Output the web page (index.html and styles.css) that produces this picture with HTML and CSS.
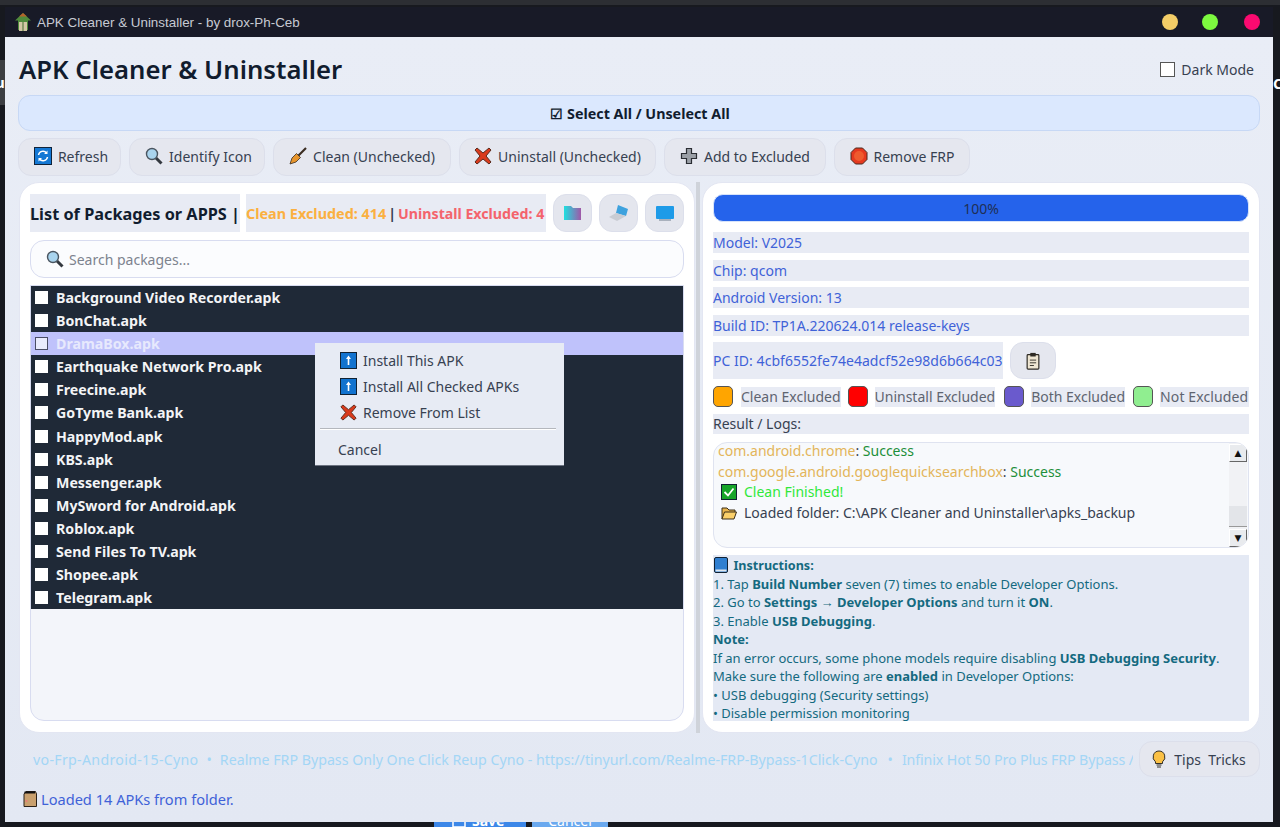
FILE: index.html
```html
<!DOCTYPE html>
<html lang="en">
<head>
<meta charset="utf-8">
<title>APK Cleaner &amp; Uninstaller</title>
<link rel="stylesheet" href="styles.css">
</head>
<body>
<div class="behind behind-top"></div>
<div class="behind behind-left"><span>u</span></div>
<div class="behind behind-right"><span>C</span></div>
<div class="behind behind-save"><svg class="savei" viewBox="0 0 14 14"><rect x="1" y="1" width="12" height="12" fill="none" stroke="#fff" stroke-width="1.500"/><rect x="4.500" y="1" width="5" height="4" fill="#fff"/></svg><span>Save</span></div>
<div class="behind behind-cancel"><span>Cancel</span></div>

<main class="window">
  <div class="titlebar">
    <svg class="ico16" viewBox="0 0 16 18"><path d="M8 0 16 7.500H13V17H3V7.500H0Z" fill="#4f8a3c"/><path d="M4 9H12V18H4Z" fill="#d3c7a6"/><path d="M7 9H9V18H7Z" fill="#8c9a6c"/><path d="M8 0 12 3.500H4Z" fill="#b5622a"/></svg>
    <span class="title-text">APK Cleaner &amp; Uninstaller - by drox-Ph-Ceb</span>
    <span class="dots"><i class="dot dot-y"></i><i class="dot dot-g"></i><i class="dot dot-r"></i></span>
  </div>
  <div class="content">
    <header class="head">
      <h1>APK Cleaner &amp; Uninstaller</h1>
      <label class="dark"><i class="darkbox"></i>Dark Mode</label>
    </header>
    <div class="selectall">☑ Select All / Unselect All</div>
    <nav class="toolbar">
      <button class="btn b-refresh"><svg class="ico18" viewBox="0 0 18 18"><rect x=".5" y=".5" width="17" height="17" fill="#1478d4" stroke="#10233a"/><path d="M4.500 8A4.500 4.500 0 0 1 12.500 6M13.500 10A4.500 4.500 0 0 1 5.500 12" fill="none" stroke="#fff" stroke-width="1.500"/><path d="M13.500 3.500V7H10ZM4.500 14.500V11H8Z" fill="#fff"/></svg>Refresh</button>
      <button class="btn b-identify"><svg class="ico18" viewBox="0 0 18 18"><use href="#mag"/></svg>Identify Icon</button>
      <button class="btn b-clean"><svg class="ico18" viewBox="0 0 18 18"><path d="M17 1 9 9" stroke="#3a2c20" stroke-width="2.200"/><path d="M7.500 6.500 11.500 10.500 7 15 1 17 3 11Z" fill="#e7952c" stroke="#3a2c20" stroke-width=".8"/></svg>Clean (Unchecked)</button>
      <button class="btn b-uninstall"><svg class="ico18" viewBox="0 0 18 18"><use href="#cross"/></svg>Uninstall (Unchecked)</button>
      <button class="btn b-add"><svg class="ico18" viewBox="0 0 18 18"><path d="M6.500 1.500H11.500V6.500H16.500V11.500H11.500V16.500H6.500V11.500H1.500V6.500H6.500Z" fill="#9a9fa6" stroke="#2a2d33" stroke-width="1.200"/></svg>Add to Excluded</button>
      <button class="btn b-frp"><svg class="ico18" viewBox="0 0 18 18"><path d="M5.500 1H12.500L17 5.500V12.500L12.500 17H5.500L1 12.500V5.500Z" fill="#e5391f" stroke="#4a2a20"/><circle cx="9" cy="9" r="5" fill="#ef5b2e"/></svg>Remove FRP</button>
    </nav>

    <div class="panels">
      <section class="panel left">
        <div class="listhead">
          <div class="listtitle">List of Packages or APPS |</div>
          <div class="counts"><span class="c-clean">Clean Excluded: 414</span><span class="c-sep">|</span><span class="c-un">Uninstall Excluded: 4</span></div>
          <button class="sq"><svg class="ico20" viewBox="0 0 20 18"><defs><linearGradient id="fg" x1="0" x2="1"><stop offset="0" stop-color="#1fe0e0"/><stop offset="1" stop-color="#a057a8"/></linearGradient></defs><path d="M1 2H8L10 4H18V16H1Z" fill="url(#fg)"/></svg></button>
          <button class="sq"><svg class="ico22" viewBox="0 0 22 20"><path d="M10 2 20 6 18 13 8 10Z" fill="#3ea2de"/><path d="M1 14 8 10 18 13 9 18Z" fill="#c9ccd3"/></svg></button>
          <button class="sq"><svg class="ico20" viewBox="0 0 20 18"><rect x="1" y="2" width="18" height="13" rx="1" fill="#1e9be8"/><path d="M4 16H16" stroke="#6e7c8c"/></svg></button>
        </div>
        <div class="search"><svg class="ico18" viewBox="0 0 18 18"><use href="#mag"/></svg><span>Search packages...</span></div>
        <div class="listbox">
          <ul class="rows">
            <li class="row"><i class="cb"></i>Background Video Recorder.apk</li>
            <li class="row"><i class="cb"></i>BonChat.apk</li>
            <li class="row sel"><i class="cb"></i>DramaBox.apk</li>
            <li class="row"><i class="cb"></i>Earthquake Network Pro.apk</li>
            <li class="row"><i class="cb"></i>Freecine.apk</li>
            <li class="row"><i class="cb"></i>GoTyme Bank.apk</li>
            <li class="row"><i class="cb"></i>HappyMod.apk</li>
            <li class="row"><i class="cb"></i>KBS.apk</li>
            <li class="row"><i class="cb"></i>Messenger.apk</li>
            <li class="row"><i class="cb"></i>MySword for Android.apk</li>
            <li class="row"><i class="cb"></i>Roblox.apk</li>
            <li class="row"><i class="cb"></i>Send Files To TV.apk</li>
            <li class="row"><i class="cb"></i>Shopee.apk</li>
            <li class="row"><i class="cb"></i>Telegram.apk</li>
          </ul>
        </div>
        <div class="menu">
          <div class="mi"><svg class="ico16m" viewBox="0 0 17 17"><use href="#up"/></svg>Install This APK</div>
          <div class="mi"><svg class="ico16m" viewBox="0 0 17 17"><use href="#up"/></svg>Install All Checked APKs</div>
          <div class="mi"><svg class="ico16m" viewBox="0 0 18 18"><use href="#cross"/></svg>Remove From List</div>
          <hr class="msep">
          <div class="mi mcancel">Cancel</div>
        </div>
      </section>

      <div class="splitter"></div>

      <section class="panel right">
        <div class="progress">100%</div>
        <div class="info">Model: V2025</div>
        <div class="info">Chip: qcom</div>
        <div class="info">Android Version: 13</div>
        <div class="info">Build ID: TP1A.220624.014 release-keys</div>
        <div class="pcrow">
          <div class="pcid">PC ID: 4cbf6552fe74e4adcf52e98d6b664c03</div>
          <button class="copy"><svg class="ico20" viewBox="0 0 18 20"><rect x="2.500" y="3" width="13" height="16" rx="1" fill="#efe6d2" stroke="#2e2a24" stroke-width="1.300"/><rect x="6" y="1" width="6" height="4" fill="#2e2a24"/><path d="M5.500 9H12.500M5.500 12H12.500M5.500 15H10" stroke="#2e2a24"/></svg></button>
        </div>
        <div class="legend">
          <i class="sw sw-o"></i><span class="lg lg1">Clean Excluded</span>
          <i class="sw sw-r"></i><span class="lg lg2">Uninstall Excluded</span>
          <i class="sw sw-p"></i><span class="lg lg3">Both Excluded</span>
          <i class="sw sw-g"></i><span class="lg lg4">Not Excluded</span>
        </div>
        <div class="resultlabel">Result / Logs:</div>
        <div class="log">
          <div class="logtext">
            <div class="ll"><span class="pkg">com.android.chrome</span>: <span class="ok">Success</span></div>
            <div class="ll"><span class="pkg">com.google.android.googlequicksearchbox</span>: <span class="ok">Success</span></div>
            <div class="ll ind"><svg class="ico16l" viewBox="0 0 16 16"><rect x=".5" y=".5" width="15" height="15" fill="#17a52a" stroke="#123"/><path d="M3.500 8 7 11.500 12.500 4.500" fill="none" stroke="#fff" stroke-width="1.800"/></svg><span class="fin">Clean Finished!</span></div>
            <div class="ll ind"><svg class="ico16l" viewBox="0 0 16 14"><path d="M1 13V2H6L8 4H14V6" fill="#e9b44c" stroke="#3b2e18"/><path d="M1 13 3.500 6H15.500L13 13Z" fill="#fbd06a" stroke="#3b2e18"/></svg><span>Loaded folder: C:\APK Cleaner and Uninstaller\apks_backup</span></div>
          </div>
          <div class="sbar">
            <div class="sbtn">▲</div>
            <div class="strack"><div class="sthumb"></div></div>
            <div class="sbtn">▼</div>
          </div>
        </div>
        <div class="instr">
          <div><svg class="ico16b" viewBox="0 0 14 16"><rect x=".5" y=".5" width="13" height="15" rx="1.500" fill="#2f7fd0" stroke="#123"/><rect x="1.500" y="12.500" width="11" height="2" fill="#dfe6ee"/></svg> <b class="ititle">Instructions:</b></div>
          <div>1. Tap <b>Build Number</b> seven (7) times to enable Developer Options.</div>
          <div>2. Go to <b>Settings → Developer Options</b> and turn it <b>ON</b>.</div>
          <div>3. Enable <b>USB Debugging</b>.</div>
          <div><b>Note:</b></div>
          <div>If an error occurs, some phone models require disabling <b>USB Debugging Security</b>.</div>
          <div>Make sure the following are <b>enabled</b> in Developer Options:</div>
          <div>• USB debugging (Security settings)</div>
          <div>• Disable permission monitoring</div>
        </div>
      </section>
    </div>

    <div class="tickerrow">
      <div class="ticker"><span class="t-first">vo-Frp-Android-15-Cyno</span><span class="t-sep">•</span>Realme FRP Bypass Only One Click Reup Cyno - https://tinyurl.com/Realme-FRP-Bypass-1Click-Cyno<span class="t-sep t-sep2">•</span><span class="t-last">Infinix Hot 50 Pro Plus FRP Bypass /</span></div>
      <button class="btn tips"><svg class="ico18" viewBox="0 0 14 18"><path d="M7 1a6 6 0 0 0-3.500 10.800V13.500H10.500V11.800A6 6 0 0 0 7 1Z" fill="#fbc146" stroke="#33302a"/><path d="M4.500 15H9.500M5 17H9" stroke="#33302a"/></svg>Tips&nbsp; Tricks</button>
    </div>
    <div class="status"><svg class="ico16p" viewBox="0 0 14 16"><path d="M1 3 3 .5H12.500L13.500 3V15.500H1Z" fill="#c9a06e" stroke="#2a2018"/><path d="M1.500 1.500H12" stroke="#111" stroke-width="2"/><circle cx="3.500" cy="10" r="1" fill="#e77"/></svg>Loaded 14 APKs from folder.</div>
  </div>
</main>

<svg class="defs" aria-hidden="true">
  <symbol id="mag" viewBox="0 0 18 18"><path d="M11 11 16.500 16.500" stroke="#33383f" stroke-width="3"/><circle cx="7" cy="7" r="5.500" fill="#a9d4ee" stroke="#4a5560" stroke-width="1.400"/></symbol>
  <symbol id="cross" viewBox="0 0 18 18"><path d="M3 1 9 6 15 1 17 3 12 9 17 15 15 17 9 12 3 17 1 15 6 9 1 3Z" fill="#d93a1c" stroke="#5a2a1c" stroke-width="1"/></symbol>
  <symbol id="up" viewBox="0 0 17 17"><rect x=".5" y=".5" width="16" height="16" fill="#1273cf" stroke="#123"/><path d="M8.500 3.500 11 7H9.300V13H7.700V7H6Z" fill="#fff"/></symbol>
</svg>
</body>
</html>
```

FILE: styles.css
```css
* { box-sizing: border-box; }
html, body { margin: 0; height: 827px; overflow: hidden; }
body {
  position: relative;
  background: #17191f;
  font-family: "Noto Sans", "Open Sans", sans-serif;
  padding: 7px 7px 5px 5px;
}
.defs { position: absolute; width: 0; height: 0; }
button { font-family: inherit; }
svg { flex: none; }

.behind { position: absolute; overflow: hidden; color: #fff; font-weight: 700; font-size: 15px; }
.behind-top { left: 0; top: 0; width: 1280px; height: 5px; background: #2c2e33; }
.behind-left { left: 0; top: 60px; width: 5px; height: 45px; background: #3c3e42; line-height: 45px; }
.behind-left span { margin-left: -5px; }
.behind-right { left: 1273px; top: 60px; width: 7px; height: 47px; background: #17191f; line-height: 47px; }
.behind-save { left: 434px; top: 815px; width: 92px; height: 12px; background: #3c87e8; font-size: 14px; line-height: 12px; display: flex; gap: 6px; padding-left: 18px; align-items: flex-start; }
.savei { width: 14px; height: 14px; margin-top: -1px; }
.behind-cancel { left: 532px; top: 815px; width: 76px; height: 12px; background: #6aa9ef; text-align: center; font-size: 14px; font-weight: 400; line-height: 12px; }

.window {
  position: relative;
  height: 815px;
  display: flex;
  flex-direction: column;
  background: #e4e9f4;
}
.titlebar {
  height: 30px;
  flex: none;
  display: flex;
  align-items: center;
  background: #181a27;
  padding: 0 12px 0 10px;
  font-family: "Liberation Sans", Arial, sans-serif;
  font-size: 13.400px;
  color: #c7cad3;
}
.ico16 { width: 16px; height: 18px; margin-right: 6px; }
.dots { margin-left: auto; display: flex; gap: 24px; padding-right: 1px; }
.dot { width: 16px; height: 16px; border-radius: 50%; display: block; }
.dot-y { background: #f3cd67; }
.dot-g { background: #7cf93f; margin-right: 2px; }
.dot-r { background: #fa0a70; }

.content {
  flex: 1;
  min-height: 0;
  display: flex;
  flex-direction: column;
  padding: 0 13px 0 13px;
  background: linear-gradient(#e9edf6, #e3e8f3);
}
.head { height: 58px; flex: none; display: flex; align-items: center; justify-content: space-between; padding: 7px 6px 0 1px; }
h1 { margin: 0; font-size: 25.700px; font-weight: 600; color: #111c2e; }
.dark { display: flex; align-items: center; gap: 6px; font-size: 14px; color: #374151; }
.darkbox { width: 15px; height: 15px; background: #fff; border: 1px solid #555; display: block; }

.selectall {
  height: 36px;
  flex: none;
  padding-left: 2px;
  border: 1px solid #c7d8f5;
  border-radius: 12px;
  background: #dbe8fe;
  display: flex;
  align-items: center;
  justify-content: center;
  font-size: 14.300px;
  font-weight: 700;
  color: #111c2e;
}
.toolbar { flex: none; display: flex; gap: 8px; margin-top: 7px; height: 38px; }
.btn {
  height: 38px;
  display: flex;
  align-items: center;
  justify-content: center;
  gap: 6px;
  padding: 0 0 2px;
  border: 1px solid #dcdfeb;
  border-radius: 13px;
  background: #e5e7ef;
  color: #374151;
  font-size: 14px;
}
.ico18 { width: 18px; height: 18px; }
.b-refresh { width: 103px; padding-left: 3px; }
.b-identify { width: 136px; padding-left: 3px; }
.b-clean { width: 178px; }
.b-uninstall { width: 197px; }
.b-add { width: 162px; }
.b-frp { width: 136px; }

.panels { flex: none; display: flex; margin-top: 6px; height: 551px; }
.panel { position: relative; background: #fff; border: 1px solid #e3e6f2; border-radius: 20px; padding: 11px 10px; display: flex; flex-direction: column; }
.left { width: 676px; margin-left: 1px; }
.splitter { width: 4px; margin: 0 2px 0 1px; background: #cfd3da; }
.right { width: 558px; }

.listhead { display: flex; height: 38px; flex: none; align-items: stretch; }
.listtitle { width: 210px; padding-top: 1px; background: #e8ebf4; font-size: 16.300px; font-weight: 700; color: #111c2e; display: flex; align-items: center; white-space: nowrap; }
.counts { margin-left: 6px; width: 300px; background: #e8ebf4; font-size: 14.200px; font-weight: 700; display: flex; align-items: center; gap: 2px; white-space: nowrap; }
.c-clean { color: #fbb040; font-size: 14.400px; }
.c-sep { color: #374151; }
.c-un { color: #f4636c; }
.sq { width: 39px; height: 38px; margin-left: 7px; background: #e4e6ee; border: 1px solid #dcdfeb; border-radius: 13px; padding: 0; display: flex; align-items: center; justify-content: center; }
.ico20 { width: 20px; height: 18px; }
.ico22 { width: 22px; height: 20px; }

.search {
  height: 38px;
  flex: none;
  margin-top: 8px;
  border: 1px solid #d8dcf0;
  border-radius: 14px;
  background: #fbfcfe;
  display: flex;
  align-items: center;
  gap: 5px;
  padding-left: 15px;
  font-size: 14px;
  color: #7d838e;
}
.listbox {
  flex: 1;
  margin-top: 7px;
  border: 1px solid #d8dcf0;
  border-radius: 0 0 14px 14px;
  background: #f3f5fa;
  overflow: hidden;
}
.rows { list-style: none; margin: 0; padding: 0; background: #1f2937; }
.row {
  height: 23.080px;
  display: flex;
  align-items: center;
  padding-left: 4px;
  color: #f3f4f6;
  font-size: 14.200px;
  font-weight: 700;
}
.cb { width: 13px; height: 13px; background: #fff; margin-right: 8px; display: block; }
.sel { background: #bfc2fb; color: #e7e9fd; }
.sel .cb { background: #e9ebfd; border: 1px solid #4a4d66; }

.menu {
  position: absolute;
  left: 295px;
  top: 160px;
  width: 249px;
  height: 123px;
  padding: 4px 5px 0;
  background: #e7ebf4;
  border-bottom: 1px solid #6b7280;
  color: #374151;
  font-size: 14px;
}
.mi { height: 26px; display: flex; align-items: center; gap: 6px; padding-left: 20px; }
.ico16m { width: 17px; height: 17px; }
.msep { margin: 3px 3px 6px 0; border: 0; border-top: 1px solid #b4b7bd; border-bottom: 1px solid #fff; }
.mcancel { padding-left: 18px; }

.progress { height: 28px; flex: none; background: #2563eb; border: 1px solid #d7e3fa; border-radius: 10px; display: flex; align-items: center; justify-content: center; font-size: 14px; color: #1f2f55; }
.info { height: 21px; flex: none; margin-top: 6.500px; background: #e8ebf4; color: #3f62d8; font-size: 14px; line-height: 21px; white-space: nowrap; }
.progress + .info { margin-top: 10px; }
.pcrow { flex: none; display: flex; gap: 7px; margin-top: 6.500px; height: 37px; }
.pcid { width: 290px; background: #e8ebf4; color: #3f62d8; font-size: 14px; letter-spacing: .04px; display: flex; align-items: center; white-space: nowrap; }
.copy { width: 46px; height: 37px; padding: 0; border: 1px solid #dcdfeb; border-radius: 13px; background: #e5e7ef; display: flex; align-items: center; justify-content: center; }
.legend { flex: none; display: flex; align-items: center; height: 21px; margin-top: 7px; font-size: 14px; color: #5e6470; }
.sw { width: 20px; height: 21px; border-radius: 5px; border: 1px solid #555; display: block; margin-right: 7px; flex: none; }
.sw-o { background: #ffa500; margin-right: 8px; }
.sw-r { background: #ff0000; }
.sw-p { background: #6a5acd; }
.sw-g { background: #90ee90; }
.lg { background: #e8ebf4; white-space: nowrap; height: 20px; line-height: 20px; }
.lg1 { margin-right: 7px; }
.lg2 { margin-right: 9px; }
.lg3 { margin-right: 8px; }
.lg4 { flex: 1; letter-spacing: .1px; }
.resultlabel { height: 20px; flex: none; margin-top: 7px; background: #e8ebf4; font-size: 14px; line-height: 20px; color: #374151; }
.log {
  flex: none;
  height: 106px;
  margin-top: 8px;
  display: flex;
  border: 1px solid #dfe3f0;
  border-radius: 14px;
  background: #f7f9fc;
  font-size: 14px;
  overflow: hidden;
}
.logtext { flex: 1; margin-top: -2px; padding: 0 0 0 4px; color: #374151; }
.ll { height: 20.500px; line-height: 20.500px; white-space: pre; display: flex; align-items: center; }
.pkg { color: #e3b55a; }
.ok { color: #1d8f3a; }
.ind { padding-left: 3px; }
.ico16l { width: 16px; height: 16px; margin-right: 7px; }
.fin { color: #30e83a; }
.sbar { width: 18px; display: flex; flex-direction: column; margin-right: 1px; padding-top: 1px; background: #f1f2f5; }
.sbtn { height: 18px; background: #e9ebee; border: 1px solid #fff; border-right-color: #666; border-bottom-color: #666; font-size: 9px; line-height: 16px; text-align: center; color: #111; font-family: "DejaVu Sans", sans-serif; }
.strack { flex: 1; display: flex; flex-direction: column; justify-content: flex-end; }
.sthumb { height: 21px; margin-bottom: 2px; background: #e3e5e9; border-bottom: 1px solid #999; }

.instr {
  flex: none;
  margin-top: 7px;
  height: 166px;
  padding-top: 1px;
  background: #e4e9f4;
  color: #146a80;
  font-size: 13px;
  line-height: 18.500px;
  overflow: hidden;
  white-space: nowrap;
}
.instr > div { height: 18.500px; }
.ico16b { width: 14px; height: 16px; vertical-align: -3px; margin-left: 1px; margin-right: 2px; }
.ititle { font-size: 12.600px; }

.tickerrow { flex: none; height: 36px; margin-top: 8px; display: flex; align-items: center; }
.ticker { flex: none; width: 1100px; margin-left: 15px; overflow: hidden; white-space: pre; font-size: 14.200px; color: #a3d6f6; }
.t-first { letter-spacing: .3px; }
.t-sep { margin: 0 8px; }
.t-sep2 { margin: 0 9px 0 10px; }
.t-last { letter-spacing: -.1px; }
.tips { width: 121px; margin-left: 6px; height: 36px; padding: 0 3px 0 0; }
.status { flex: none; margin-top: 12px; padding-left: 5px; display: flex; align-items: center; gap: 4px; font-size: 14.600px; color: #3f62d8; }
.ico16p { width: 14px; height: 16px; }
```
